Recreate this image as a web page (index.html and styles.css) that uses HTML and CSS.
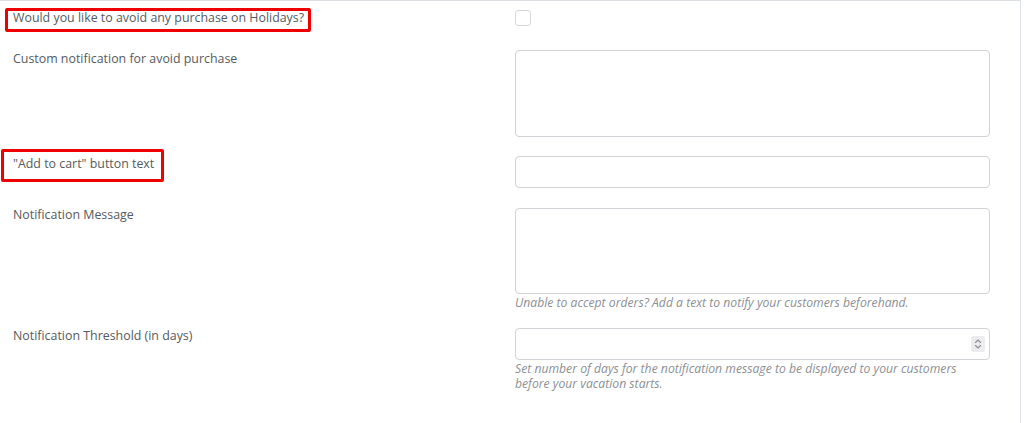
FILE: index.html
```html
<!DOCTYPE html>
<html lang="en">
<head>
<meta charset="utf-8">
<title>Holiday settings</title>
<link rel="stylesheet" href="styles.css">
</head>
<body>
<div class="panel">
  <div class="row row-check">
    <div class="label"><span class="mark mark-a">Would you like to avoid any purchase on Holidays?</span></div>
    <div class="field"><input type="checkbox" class="check"></div>
  </div>
  <div class="row row-area">
    <div class="label">Custom notification for avoid purchase</div>
    <div class="field"><textarea class="area area-a"></textarea></div>
  </div>
  <div class="row">
    <div class="label"><span class="mark mark-b">"Add to cart" button text</span></div>
    <div class="field"><input type="text" class="text"></div>
  </div>
  <div class="row row-msg">
    <div class="label">Notification Message</div>
    <div class="field">
      <textarea class="area area-b"></textarea>
      <p class="help">Unable to accept orders? Add a text to notify your customers beforehand.</p>
    </div>
  </div>
  <div class="row">
    <div class="label">Notification Threshold (in days)</div>
    <div class="field">
      <div class="num-wrap">
        <input type="text" class="text">
        <span class="spin">
          <svg width="8" height="12" viewBox="0 0 8 12" fill="none" stroke="#8a8e93" stroke-width="1.1" stroke-linecap="round" stroke-linejoin="round"><path d="M1.5 4.5 L4 2 L6.5 4.5"/><path d="M1.5 7.5 L4 10 L6.5 7.5"/></svg>
        </span>
      </div>
      <p class="help">Set number of days for the notification message to be displayed to your customers before your vacation starts.</p>
    </div>
  </div>
</div>
</body>
</html>
```

FILE: styles.css
```css
html, body {
  margin: 0;
  padding: 0;
  background: #ffffff;
}

body {
  font-family: "Open Sans", "Noto Sans", sans-serif;
  color: #555a60;
}

.panel {
  box-sizing: border-box;
  width: 1021px;
  height: 423px;
  border-top: 1px solid #dcdfe4;
  border-right: 1px solid #dcdfe4;
  padding-top: 8px;
}

.row {
  display: grid;
  grid-template-columns: 515px 475px;
  margin-bottom: 20px;
}

.row-check {
  height: 21px;
}

.row-area {
  margin-bottom: 19px;
}

.row-msg {
  margin-bottom: 18px;
}

.label {
  box-sizing: border-box;
  padding-left: 13px;
  font-size: 12.4px;
  line-height: 20px;
  margin-top: -2px;
}

.row-check .label,
.row-area .label {
  margin-top: -1px;
}

.row-msg .label {
  margin-top: -3px;
}

.mark {
  position: relative;
}

.mark::after {
  content: "";
  position: absolute;
  border: 3px solid #ee0000;
  border-radius: 2px;
  pointer-events: none;
}

.mark-a::after {
  left: -8px;
  right: -7px;
  top: -1px;
  bottom: -6px;
}

.mark-b::after {
  left: -12px;
  right: -10px;
  top: -6px;
  bottom: -10px;
}

.field {
  display: flex;
  flex-direction: column;
  align-items: flex-start;
}

.check {
  appearance: none;
  -webkit-appearance: none;
  box-sizing: border-box;
  width: 16px;
  height: 16px;
  margin: 1px 0 0 0;
  border: 1px solid #d6d8db;
  border-radius: 3px;
  background: #fff;
}

.area,
.text {
  box-sizing: border-box;
  width: 475px;
  margin: 0;
  border: 1px solid #cfd2d6;
  border-radius: 4px;
  background: #fff;
  font-family: inherit;
  resize: none;
  outline: none;
}

.area-a {
  height: 87px;
}

.area-b {
  height: 86px;
}

.text {
  height: 32px;
  padding: 0 8px;
}

.num-wrap {
  position: relative;
  width: 475px;
}

.spin {
  position: absolute;
  right: 5px;
  top: 8px;
  width: 14px;
  height: 16px;
  background: #ececee;
  border-radius: 2px;
  display: flex;
  align-items: center;
  justify-content: center;
}

.help {
  margin: 1px 0 0 0;
  font-size: 12.2px;
  line-height: 15px;
  font-style: italic;
  color: #8c8f94;
  width: 475px;
}
```
